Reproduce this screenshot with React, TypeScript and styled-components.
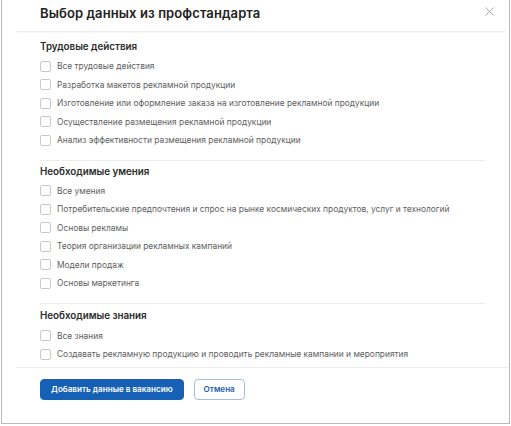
import styled, { createGlobalStyle } from "styled-components";

const Global = createGlobalStyle`
    html, body {
        margin: 0;
        padding: 0;
        background: #ffffff;
    }
    body {
        font-family: Inter, "Noto Sans", sans-serif;
    }
`

const Modal = styled.div`
    width: 507px;
    height: 423px;
    margin-left: 1px;
    border: 1px solid #b9b9b9;
    border-top: none;
    background: #fff;
    display: flex;
    flex-direction: column;
`

const Header = styled.div`
    height: 32px;
    margin: 0 4px 0 15px;
    padding-left: 23px;
    border-bottom: 1px solid #ececec;
    box-shadow: 0 1px 1px rgba(0, 0, 0, 0.03);
    display: flex;
    align-items: center;
    justify-content: space-between;
    box-sizing: border-box;
`

const Title = styled.h1`
    margin: 0 0 6px;
    font-size: 13px;
    font-weight: 600;
    color: #222;
    letter-spacing: 0.1px;
`

const Close = styled.button`
    width: 20px;
    height: 20px;
    margin: 0 6px 8px 0;
    padding: 0;
    border: none;
    background: transparent;
    display: flex;
    align-items: center;
    justify-content: center;
`

const Section = styled.div<{$top: number; $bottom: number; $gap: number; $divider?: boolean}>`
    margin: 0 24px 0 38px;
    padding-top: ${p => p.$top}px;
    padding-bottom: ${p => p.$bottom}px;
    border-bottom: ${p => p.$divider ? "1px solid #ececec" : "none"};
    display: flex;
    flex-direction: column;
    gap: ${p => p.$gap}px;
`

const SectionTitle = styled.div`
    height: 14px;
    line-height: 14px;
    font-size: 9.8px;
    font-weight: 600;
    color: #2b2b2b;
`

const List = styled.div`
    display: flex;
    flex-direction: column;
`

const Row = styled.label`
    height: 18.5px;
    display: flex;
    align-items: center;
    gap: 6px;
    font-size: 8.4px;
    color: #5e5e5e;
`

const Box = styled.span`
    width: 11px;
    height: 11px;
    border: 1px solid #c8c8c8;
    border-radius: 2px;
    box-sizing: border-box;
    flex: none;
`

const Footer = styled.div`
    margin-left: 15px;
    border-top: 1px solid #ececec;
    padding: 11px 0 0 23px;
    display: flex;
    gap: 10px;
`

const Button = styled.button<{$primary?: boolean}>`
    height: 21px;
    padding: 0 ${p => p.$primary ? 10 : 9}px;
    border-radius: 4px;
    font-family: Inter, "Noto Sans", sans-serif;
    font-size: 8.1px;
    font-weight: 600;
    color: ${p => p.$primary ? "#fff" : "#1a5cac"};
    background: ${p => p.$primary ? "#1660b5" : "#fff"};
    border: 1px solid ${p => p.$primary ? "#1660b5" : "#a6bedd"};
`

const sections = [
    {
        title: "Трудовые действия",
        top: 8, bottom: 10, gap: 3,
        items: [
            "Все трудовые действия",
            "Разработка макетов рекламной продукции",
            "Изготовление или оформление заказа на изготовление рекламной продукции",
            "Осуществление размещения рекламной продукции",
            "Анализ эффективности размещения рекламной продукции",
        ],
    },
    {
        title: "Необходимые умения",
        top: 4, bottom: 10, gap: 3,
        items: [
            "Все умения",
            "Потребительские предпочтения и спрос на рынке космических продуктов, услуг и технологий",
            "Основы рекламы",
            "Теория организации рекламных кампаний",
            "Модели продаж",
            "Основы маркетинга",
        ],
    },
    {
        title: "Необходимые знания",
        top: 5, bottom: 3, gap: 4,
        items: [
            "Все знания",
            "Создавать рекламную продукцию и проводить рекламные кампании и мероприятия",
        ],
    },
]

export default function App() {
    return (
        <>
            <Global />
            <Modal>
                <Header>
                    <Title>Выбор данных из профстандарта</Title>
                    <Close aria-label="Закрыть">
                        <svg width="9" height="9" viewBox="0 0 9 9">
                            <path d="M0.5 0.5 L8.5 8.5 M8.5 0.5 L0.5 8.5" stroke="#a8a8a8" strokeWidth="1" />
                        </svg>
                    </Close>
                </Header>

                {sections.map((s, i) => (
                    <Section key={s.title} $top={s.top} $bottom={s.bottom} $gap={s.gap} $divider={i < sections.length - 1}>
                        <SectionTitle>{s.title}</SectionTitle>
                        <List>
                            {s.items.map(item => (
                                <Row key={item}>
                                    <Box />
                                    {item}
                                </Row>
                            ))}
                        </List>
                    </Section>
                ))}

                <Footer>
                    <Button $primary>Добавить данные в вакансию</Button>
                    <Button>Отмена</Button>
                </Footer>
            </Modal>
        </>
    )
}
